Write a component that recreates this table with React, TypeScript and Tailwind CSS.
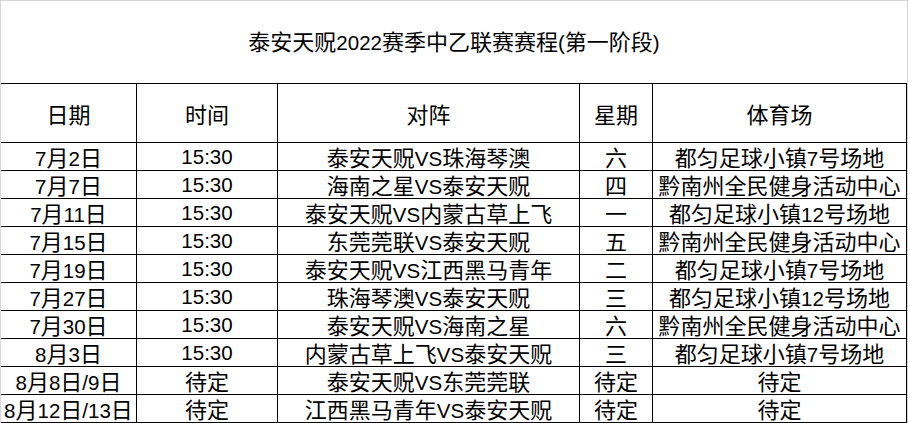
import React from "react"

const rows = [
  ["7月2日", "15:30", "泰安天贶VS珠海琴澳", "六", "都匀足球小镇7号场地"],
  ["7月7日", "15:30", "海南之星VS泰安天贶", "四", "黔南州全民健身活动中心"],
  ["7月11日", "15:30", "泰安天贶VS内蒙古草上飞", "一", "都匀足球小镇12号场地"],
  ["7月15日", "15:30", "东莞莞联VS泰安天贶", "五", "黔南州全民健身活动中心"],
  ["7月19日", "15:30", "泰安天贶VS江西黑马青年", "二", "都匀足球小镇7号场地"],
  ["7月27日", "15:30", "珠海琴澳VS泰安天贶", "三", "都匀足球小镇12号场地"],
  ["7月30日", "15:30", "泰安天贶VS海南之星", "六", "黔南州全民健身活动中心"],
  ["8月3日", "15:30", "内蒙古草上飞VS泰安天贶", "三", "都匀足球小镇7号场地"],
  ["8月8日/9日", "待定", "泰安天贶VS东莞莞联", "待定", "待定"],
  ["8月12日/13日", "待定", "江西黑马青年VS泰安天贶", "待定", "待定"],
]

const headers = ["日期", "时间", "对阵", "星期", "体育场"]
const widths = ["w-[136px]", "w-[141px]", "w-[302px]", "w-[73px]", "w-[254px]"]

// latin runs get the Arial-width face, the rest the CJK face a bit larger
function Txt({ text }: { text: string }) {
  const parts = text.match(/[\x00-\x7f]+|[^\x00-\x7f]+/g) || []
  return (
    <span className="whitespace-nowrap leading-[22px]">
      {parts.map((p, i) =>
        /^[\x00-\x7f]/.test(p) ? (
          <span key={i} className="font-['Liberation_Sans',sans-serif] text-[20.5px] leading-[22px]">
            {p}
          </span>
        ) : (
          <span key={i} className="font-['Noto_Sans_CJK_SC',sans-serif] text-[22px] leading-[22px]">
            {p}
          </span>
        )
      )}
    </span>
  )
}

function Row({ cells, tall }: { cells: string[]; tall?: boolean }) {
  return (
    <div className={`flex border-b border-black ${tall ? "h-[59px]" : "h-[28px]"}`}>
      {cells.map((c, i) => (
        <div
          key={i}
          className={`${widths[i]} flex shrink-0 items-center justify-center border-r border-black leading-[22px] text-black ${tall ? "pt-[4px]" : "pt-[2px]"}`}
        >
          <Txt text={c} />
        </div>
      ))}
    </div>
  )
}

export default function App() {
  return (
    <div className="h-[423px] w-[908px] overflow-hidden border-x border-t border-[#d6d6d6] bg-white">
      <div className="flex h-[83px] items-center justify-center border-b border-black leading-[22px] text-black">
        <Txt text="泰安天贶2022赛季中乙联赛赛程(第一阶段)" />
      </div>
      <Row cells={headers} tall />
      {rows.map((r, i) => (
        <Row key={i} cells={r} />
      ))}
    </div>
  )
}
